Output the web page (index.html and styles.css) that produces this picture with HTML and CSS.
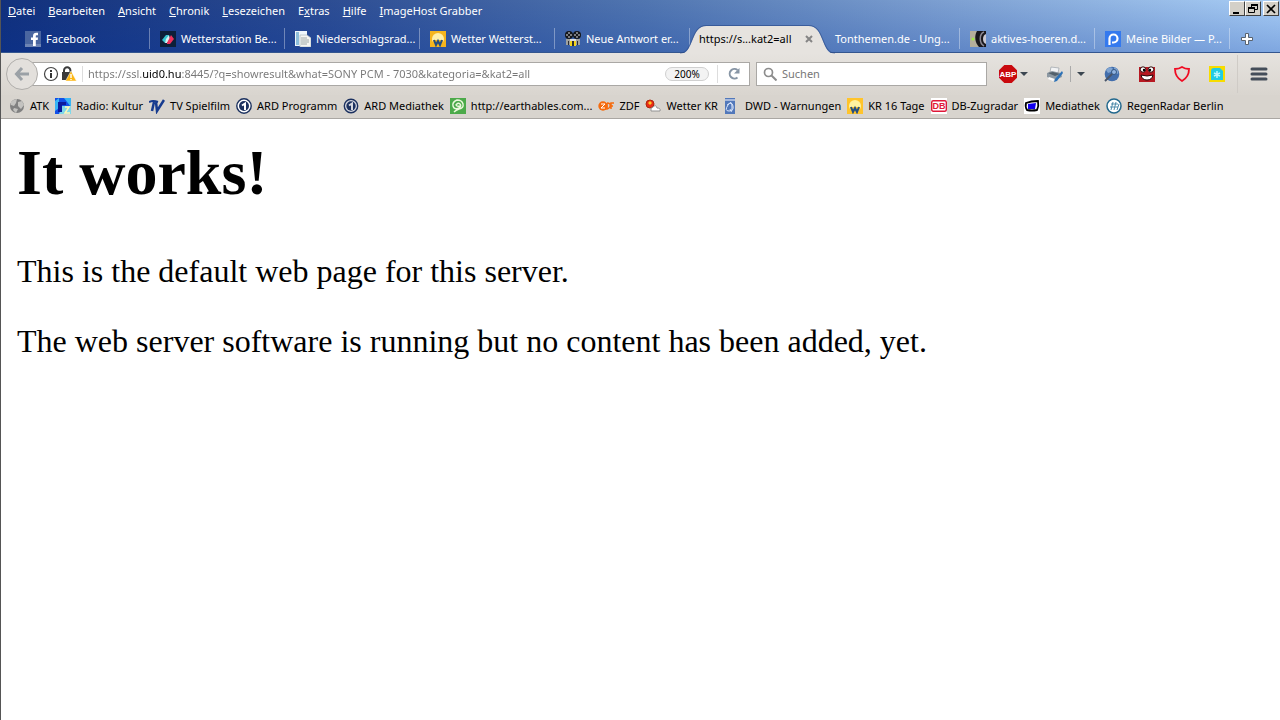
FILE: index.html
```html
<!DOCTYPE html>
<html lang="de">
	<head>
		<meta charset="utf-8">
		<title>It works!</title>
		<link rel="stylesheet" href="styles.css">
	</head>
	<body>
		<header class="chrome">
			<div class="titlebar">
				<nav class="menu">
					<button><u>D</u>atei</button>
					<button><u>B</u>earbeiten</button>
					<button><u>A</u>nsicht</button>
					<button><u>C</u>hronik</button>
					<button><u>L</u>esezeichen</button>
					<button>E<u>x</u>tras</button>
					<button><u>H</u>ilfe</button>
					<button><u>I</u>mageHost Grabber</button>
				</nav>
				<div class="window-buttons">
					<button aria-label="Minimieren"><svg viewBox="0 0 12 12"><path d="M2 9h6v2H2z"/></svg></button>
					<button aria-label="Verkleinern"><svg viewBox="0 0 12 12"><path d="M4.5 4V1.5h6v5H8" fill="none" stroke="#000"/><path d="M4 1h7v2H4zM1 4h7v2H1z"/><path d="M1.5 4.5h6v5h-6z" fill="none" stroke="#000"/></svg></button>
					<button aria-label="Schließen" class="close"><svg viewBox="0 0 12 12"><path d="M2 2l8 8M10 2l-8 8" stroke="#000" stroke-width="1.7"/></svg></button>
				</div>
			</div>

			<div class="tabs" role="tablist">
				<button class="tab" role="tab">
					<svg class="icon" viewBox="0 0 16 16"><path d="M0 0h16v16H0z" fill="#4a66a0"/><path d="M0 13h16v3H0z" fill="#6d84b4"/><path d="M8 15V9H6V6.500h2V5c0-2.300 1.400-3.300 3.200-3.300H13v2.500h-1.200c-.8 0-1 .4-1 1v1.300H13L12.700 9h-1.900v6z" fill="#fff"/></svg>
					<span>Facebook</span>
				</button>
				<button class="tab" role="tab">
					<svg class="icon" viewBox="0 0 16 16"><path d="M0 0h16v16H0z" fill="#0d1f38"/><path d="M2 9l4-5h3L5 12z" fill="#35c4cf"/><path d="M6 8l3-4 1 4-3 4H5z" fill="#d8f3f4"/><path d="M7 12l4-8 3 4-4 5H7z" fill="#f0305c"/></svg>
					<span>Wetterstation Be...</span>
				</button>
				<button class="tab" role="tab">
					<svg class="icon" viewBox="0 0 16 16"><path d="M0 0h12v15H0z" fill="#eef6fb"/><path d="M1 1h3v13H1z" fill="#8ebfdc"/><path d="M5 4h7l4 3v9H5z" fill="#f5f5f2" stroke="#aebac0" stroke-width=".7"/><path d="M6 7h6M6 9h8M6 11h8M6 13h6" stroke="#9faaa9"/></svg>
					<span>Niederschlagsrad...</span>
				</button>
				<button class="tab" role="tab">
					<svg class="icon" viewBox="0 0 16 16"><path d="M0 0h16v16H0z" fill="#f6b51d"/><circle cx="8" cy="8" r="6" fill="#fff0a8"/><path d="M3 9h10v7H3z" fill="#f6b51d"/><path d="M4 9l2 5 2-4 2 4 2-5" fill="none" stroke="#234e82" stroke-width="2"/></svg>
					<span>Wetter Wetterst...</span>
				</button>
				<button class="tab" role="tab">
					<svg class="icon" viewBox="0 0 16 16"><circle cx="4" cy="4" r="4" fill="#15171a"/><circle cx="12" cy="4" r="4" fill="#15171a"/><g fill="#9b9da0"><circle cx="4" cy="2" r="1"/><circle cx="2" cy="4" r="1"/><circle cx="6" cy="4" r="1"/><circle cx="4" cy="6" r="1"/><circle cx="12" cy="2" r="1"/><circle cx="10" cy="4" r="1"/><circle cx="14" cy="4" r="1"/><circle cx="12" cy="6" r="1"/></g><path d="M1 8h14v6H1z" fill="#9fa19f"/><path d="M5 8h6v2H5z" fill="#ddd"/><path d="M3 10h1v4H3zM12 10h1v4h-1zM7 10h2v5H7z" fill="#2b2d30"/><path d="M5 10h2v5H5zM9 10h2v5H9z" fill="#f2d51e"/></svg>
					<span>Neue Antwort er...</span>
				</button>
				<button class="tab active" role="tab" aria-selected="true">
					<svg class="tab-shape" viewBox="0 0 154 29" preserveAspectRatio="none"><path d="M0 29C14 29 10 1 26 1H128C144 1 140 29 154 29z" fill="#e6e3df"/><path d="M0 28C14 28 10 .5 26 .5H128C144 .5 140 28 154 28" fill="none" stroke="#2e4f8d" stroke-opacity=".7"/></svg>
					<span>https://s...kat2=all</span>
					<svg class="tab-close" viewBox="0 0 8 8"><path d="M1 1l6 6M7 1L1 7" stroke="#858585" stroke-width="2"/></svg>
				</button>
				<button class="tab" role="tab"><span>Tonthemen.de - Ung...</span></button>
				<button class="tab" role="tab">
					<svg class="icon" viewBox="0 0 16 16"><path d="M0 0h16v16H0z" fill="#b4ae9b"/><path d="M7 0h9v16H9C5 12 4 5 7 0z" fill="#17161b"/><path d="M14 1c-5 2-5 11 0 14" fill="none" stroke="#8b8893" stroke-width="1.5"/><path d="M16 3c-4 1-4 9 0 10z" fill="#c9c8d2"/><circle cx="3" cy="8" r="1.500" fill="#a0ec45"/></svg>
					<span>aktives-hoeren.d...</span>
				</button>
				<button class="tab" role="tab">
					<svg class="icon" viewBox="0 0 16 16"><path d="M0 0h16v16H0z" fill="#3479ee"/><path d="M4.500 14V7.500a4 4 0 1 1 4 4H7" fill="none" stroke="#fff" stroke-width="2.200"/></svg>
					<span>Meine Bilder — P...</span>
				</button>
				<button class="new-tab" aria-label="Neuer Tab"><svg viewBox="0 0 12 12"><path d="M4.500.5h3v4h4v3h-4v4h-3v-4h-4v-3h4z" fill="#fff" stroke="#59636f"/></svg></button>
			</div>

			<div class="toolbar">
				<button class="back" aria-label="Zurück"><svg viewBox="0 0 16 16"><path d="M8 2L2.500 8 8 14M3 8h12" fill="none" stroke="#9ba1a6" stroke-width="3"/></svg></button>
				<div class="urlbar">
					<svg class="icon" viewBox="0 0 16 16"><circle cx="8" cy="8" r="6.500" fill="none" stroke="#444" stroke-width="1.200"/><path d="M7 7h2v5H7zM7 4h2v2H7z" fill="#333"/></svg>
					<svg class="icon" viewBox="0 0 16 16"><path d="M3 7V4.500a3.200 3.200 0 0 1 6.400 0V7" fill="none" stroke="#3a3a3a" stroke-width="2"/><path d="M1 6h10v8H1z" fill="#3a3a3a"/><path d="M10 5l5.500 10h-11z" fill="#fdb713" stroke="#fff" stroke-width=".5"/><path d="M9.300 8h1.400v4H9.300zM9.300 13h1.400v1H9.300z" fill="#fff"/></svg>
					<input class="url" type="text" aria-label="Adresse" value="https://ssl.uid0.hu:8445/?q=showresult&amp;what=SONY PCM - 7030&amp;kategoria=&amp;kat2=all">
					<button class="zoom-level">200%</button>
					<button class="reload" aria-label="Neu laden"><svg viewBox="0 0 14 14"><path d="M10.500 10.500a4.800 4.800 0 1 1 0-7.500" fill="none" stroke="#8795a5" stroke-width="2"/><path d="M12.500 1v5.500H7z" fill="#8795a5"/></svg></button>
				</div>
				<div class="searchbar">
					<svg viewBox="0 0 14 14"><circle cx="5.500" cy="5.500" r="4" fill="none" stroke="#8c8c8c" stroke-width="1.700"/><path d="M8.500 8.500l5 5" stroke="#8c8c8c" stroke-width="2"/></svg>
					<input type="text" aria-label="Suchen" placeholder="Suchen">
				</div>
				<div class="addons">
					<button class="addon-menu" aria-label="Adblock Plus">
						<svg class="abp" viewBox="0 0 18 18"><path d="M5.300 0h7.400L18 5.300v7.400L12.700 18H5.300L0 12.700V5.300z" fill="#c9090e"/><text x="9" y="12" text-anchor="middle">ABP</text></svg>
						<svg class="arrow" viewBox="0 0 8 4"><path d="M0 0h8L4 4z"/></svg>
					</button>
					<button aria-label="Drucken"><svg class="icon" viewBox="0 0 16 16"><path d="M4 1l8 1-1 5-8-1z" fill="#f2f3f4" stroke="#8d969e" stroke-width=".6"/><path d="M0 7l5-2 9 2 1 4-7 3-8-3z" fill="#8c98a2"/><path d="M1 7l5-1 7 2-5 2z" fill="#52606b"/><path d="M2 11l6 2-2 2-5-2z" fill="#fafafa"/><path d="M8 13l7-8 1 2-6 8-3 1z" fill="#2d72b7"/></svg></button>
					<button class="split" aria-label="Druckoptionen"><svg class="arrow" viewBox="0 0 8 4"><path d="M0 0h8L4 4z"/></svg></button>
					<button aria-label="Globus"><svg class="icon" viewBox="0 0 16 16"><circle cx="8" cy="8" r="7.300" fill="#426eac"/><path d="M2 4c3-4 6-3 7-1L7 6 4 7zM10 1c3 1 5 4 4 7l-4-2z" fill="#7fa3d0"/><path d="M1 15l8-8" stroke="#49566a" stroke-width="2"/><circle cx="10" cy="6" r="2.500" fill="#8fb3e0" stroke="#345782"/></svg></button>
					<button aria-label="Monster"><svg class="icon" viewBox="0 0 16 16"><path d="M0 1h16v15H0z" fill="#b71922"/><circle cx="4" cy="3.500" r="2.700" fill="#fff" stroke="#310e10"/><circle cx="12" cy="3.500" r="2.700" fill="#fff" stroke="#310e10"/><circle cx="5" cy="4" r="1.200"/><circle cx="11" cy="4" r="1.200"/><path d="M2 9q6 2 12 0-1 5-6 5T2 9z" fill="#fff" stroke="#250608"/></svg></button>
					<button aria-label="Schutz"><svg class="icon" viewBox="0 0 16 16"><path d="M8 1q3 2 7 2 0 8-7 12Q1 11 1 3q4 0 7-2z" fill="none" stroke="#f00b22" stroke-width="1.800"/></svg></button>
					<button aria-label="Wetter"><svg class="icon" viewBox="0 0 16 16"><path d="M0 0h16v16H0z" fill="#f7dc00"/><path d="M2 5q0-3 3-3h6l3 3v9H2z" fill="#20cce5"/><path d="M8 5v7M5 7l6 3M11 7l-6 3" stroke="#b5f4fa" stroke-width="1.500"/></svg></button>
					<button class="hamburger" aria-label="Menü"><svg viewBox="0 0 18 14"><path d="M2 2h14M2 7h14M2 12h14" stroke="#444d59" stroke-width="3" stroke-linecap="round"/></svg></button>
				</div>
			</div>

			<nav class="bookmarks">
				<a href="#"><svg class="icon" viewBox="0 0 16 16"><circle cx="8" cy="8" r="7" fill="#818181"/><path d="M2 4q3-3 6-3L7 5 5 8 2 7zM9 4l4-1 2 4-3 4-3-3zM5 10l4 1-2 4-3-3z" fill="#c4c3c0"/></svg>ATK</a>
				<a href="#"><svg class="icon" viewBox="0 0 16 16"><path d="M0 0h16v16H0z" fill="#1250e8"/><path d="M0 3l4-3v10l-4 3z" fill="#38b4f5"/><path d="M9 0h7v9z" fill="#38b4f5"/><path d="M7 8h9v8H4z" fill="#7fd8ea"/><path d="M3 14V4h8v3H7v7z" fill="#0c1b9c"/><path d="M10 9h4l-4 6h5" fill="none" stroke="#fff6b8" stroke-width="1.500"/></svg>Radio: Kultur</a>
				<a href="#"><svg class="icon" viewBox="0 0 16 16"><path d="M0 4q4-2 9 0" fill="none" stroke="#173b8f" stroke-width="2"/><path d="M5 4L3 13M7 4l1 9 7-11" fill="none" stroke="#173b8f" stroke-width="2.500"/></svg>TV Spielfilm</a>
				<a href="#"><svg class="icon" viewBox="0 0 16 16"><circle cx="8" cy="8" r="7.200" fill="#fff" stroke="#1c315f" stroke-width="1.400"/><circle cx="8" cy="8" r="5" fill="#1c315f"/><path d="M6 7.500l3-2V12" fill="none" stroke="#fff" stroke-width="2"/></svg>ARD Programm</a>
				<a href="#"><svg class="icon" viewBox="0 0 16 16"><circle cx="8" cy="8" r="6.700" fill="#d7d8df" stroke="#1c315f" stroke-width="1.400"/><circle cx="8" cy="8" r="4.700" fill="#1c315f"/><path d="M6 7.500l3-2V12" fill="none" stroke="#d7d8df" stroke-width="2"/></svg>ARD Mediathek</a>
				<a href="#"><svg class="icon" viewBox="0 0 16 16"><path d="M0 0h16v16H0z" fill="#4caa4a"/><path d="M4 14q2-2 5-3 5-1 4-5T7 2Q2 4 3 8t6 2q3-2 1-4T6 7q1 2 4 1" fill="none" stroke="#ecf8dc" stroke-width="1.400"/></svg>http://earthables.com...</a>
				<a href="#"><svg class="icon" viewBox="0 0 16 16"><circle cx="5" cy="8" r="4.700" fill="#f56b0e"/><path d="M9 5v6q4-1 3-5-1-1-3-1M13 11V5h3M13 8h2" fill="none" stroke="#f56b0e" stroke-width="1.500"/><path d="M3 6h4l-4 4h4" fill="none" stroke="#fff"/></svg>ZDF</a>
				<a href="#"><svg class="icon" viewBox="0 0 16 16"><circle cx="5" cy="6" r="4" fill="#e92b16" stroke="#ad270c"/><path d="M3 5l2-2 2 2-2 2z" fill="#ffca24"/><path d="M6 13q-1-3 2-4 3-3 4 1 4 0 3 3z" fill="#fff" stroke="#929292"/></svg>Wetter KR</a>
				<a href="#"><svg class="icon" viewBox="0 0 16 16"><path d="M1 0h10v16H1z" fill="#5278ba"/><path d="M1 1h10v2H1z" fill="#a6b9dd"/><path d="M3 7q5-4 6 1t-4 5-1-6 4 2-2 2" fill="none" stroke="#d9e5fa"/></svg>DWD - Warnungen</a>
				<a href="#"><svg class="icon" viewBox="0 0 16 16"><path d="M0 0h16v16H0z" fill="#ffc42b"/><circle cx="8" cy="8" r="6" fill="#fff2a0"/><path d="M3 9h10v7H3z" fill="#ffc42b"/><path d="M4 9l2 5 2-4 2 4 2-5" fill="none" stroke="#234e82" stroke-width="2"/></svg>KR 16 Tage</a>
				<a href="#"><svg class="icon" viewBox="0 0 16 16"><path d="M0 0h16v16H0z" fill="#fff"/><rect x=".7" y="2.700" width="14.600" height="10.600" rx="1.500" fill="#fff" stroke="#df1838" stroke-width="1.400"/><text class="db" x="8" y="11" text-anchor="middle">DB</text></svg>DB-Zugradar</a>
				<a href="#"><svg class="icon" viewBox="0 0 16 16"><path d="M0 0h16v16H0z" fill="#fff"/><path d="M2 5q5-2 12-2 1 5-1 9-5 1-10 0Q1 9 2 5z" fill="#fff" stroke="#000" stroke-width="1.800"/><path d="M4 6l8-1-1 6H4z" fill="#1200ee"/></svg>Mediathek</a>
				<a href="#"><svg class="icon" viewBox="0 0 16 16"><circle cx="8" cy="8" r="7" fill="#fff" stroke="#22688d" stroke-width="1.500"/><path d="M7 4L5 12M10 4L8 12M13 6l-2 6M5 6h7M4 9h8" stroke="#4f8baa"/></svg>RegenRadar Berlin</a>
			</nav>
		</header>

		<main class="page">
			<h1>It works!</h1>
			<p>This is the default web page for this server.</p>
			<p>The web server software is running but no content has been added, yet.</p>
		</main>
	</body>
</html>
```
FILE: styles.css
```css
* {
	box-sizing: border-box;
}

body {
	margin: 0;
	min-height: 100vh;
	display: flex;
	flex-direction: column;
	border-left: 1px solid #555;
	background: #fff;
}

button {
	padding: 0;
	border: 0;
	background: none;
	color: inherit;
	font: inherit;
	white-space: nowrap;
}

svg {
	display: block;
	flex: none;
}

.icon {
	width: 16px;
	height: 16px;
}

.chrome {
	font: 11px/16px "Noto Sans", sans-serif;
	color: #000;
	background: linear-gradient(rgba(0, 50, 160, 0), rgba(0, 50, 160, 0.25) 53px), linear-gradient(90deg, #11307c, #2c4c92 25%, #5075b0 50%, #7fa2d3 75%, #a8cdf5);
}

/* menu + window buttons */
.titlebar {
	height: 22px;
	display: flex;
	justify-content: space-between;
	align-items: flex-start;
	padding: 1px 1px 0 7px;
}

.menu {
	display: flex;
	gap: 13px;
	padding-top: 2px;
	color: #fff;
}

.window-buttons {
	display: flex;
}

.window-buttons button {
	width: 16px;
	height: 15px;
	padding: 1px;
	background: #d4d0c8;
	border: 1px solid;
	border-color: #fff #404040 #404040 #fff;
}

.window-buttons svg {
	width: 12px;
	height: 12px;
}

.window-buttons .close {
	margin-left: 2px;
}

/* tabs */
.tabs {
	display: flex;
	height: 31px;
	padding: 3px 0 0 14px;
	color: #fff;
	box-shadow: inset 0 -1px #34568f;
}

.tab {
	position: relative;
	flex: 0 1 135px;
	display: flex;
	align-items: center;
	gap: 5px;
	padding-left: 10px;
	background: linear-gradient(rgba(255, 255, 255, 0.35), rgba(255, 255, 255, 0.35)) right 3px / 1px 21px no-repeat;
}

.tab.active {
	z-index: 1;
	justify-content: space-between;
	padding: 0 12px 0 9px;
	background: none;
	color: #000;
}

.tab.active span,
.tab-close {
	position: relative;
}

.tab-shape {
	position: absolute;
	left: -10px;
	top: 0;
	width: calc(100% + 20px);
	height: 29px;
}

.tab-close {
	width: 8px;
	height: 8px;
}

.new-tab {
	padding: 0 11px;
}

.new-tab svg {
	width: 12px;
	height: 12px;
}

/* address bar row */
.toolbar {
	display: flex;
	align-items: center;
	height: 42px;
	padding: 0 12px 0 5px;
	background: linear-gradient(#e6e3df, #d9d5cf);
}

.back {
	z-index: 1;
	width: 32px;
	height: 32px;
	padding: 7px;
	border: 1px solid #b0aeab;
	border-radius: 50%;
	background: #e3e0dc;
}

.back svg {
	width: 16px;
	height: 16px;
}

.urlbar,
.searchbar {
	display: flex;
	align-items: center;
	height: 24px;
	background: #fff;
	border: 1px solid #aaa8a5;
}

.urlbar {
	flex: 1;
	margin-left: -8px;
	padding-left: 12px;
	gap: 2px;
}

.urlbar input,
.searchbar input {
	flex: 1;
	min-width: 0;
	height: 16px;
	border: 0;
	padding: 0;
	outline: 0;
	font: inherit;
	background: none;
}

/* the host name is darker than the rest of the address */
.urlbar .url {
	margin-left: 3px;
	padding-left: 5px;
	border-left: 1px solid #ddd;
	background: linear-gradient(90deg, #777 59px, #000 59px, #000 98px, #777 98px);
	background-clip: text;
	-webkit-background-clip: text;
	color: transparent;
}

.zoom-level {
	width: 44px;
	height: 14px;
	border: 1px solid #d0d0d0;
	border-radius: 7px;
	background: #f3f3f3;
	font-size: 10px;
	line-height: 12px;
}

.reload {
	display: flex;
	justify-content: center;
	width: 32px;
	height: 18px;
	margin-left: 6px;
	padding-top: 2px;
	border-left: 1px solid #ddd;
}

.reload svg {
	width: 14px;
	height: 14px;
}

.searchbar {
	flex: 0 1 231px;
	margin-left: 6px;
	padding-left: 6px;
	gap: 5px;
}

.searchbar svg {
	width: 14px;
	height: 14px;
}

.searchbar input::placeholder {
	color: #777;
	opacity: 1;
}

.addons {
	display: flex;
	align-items: center;
	padding-left: 12px;
}

.addons button {
	margin-right: 19px;
}

.addons .addon-menu {
	display: flex;
	align-items: center;
	gap: 3px;
}

.abp {
	width: 18px;
	height: 18px;
}

.abp text {
	font: bold 8px "Liberation Sans", sans-serif;
	fill: #fff;
}

.arrow {
	width: 8px;
	height: 4px;
	fill: #3b4650;
}

.addons .split {
	height: 16px;
	margin-left: -12px;
	padding-left: 6px;
	border-left: 1px solid #aaa;
}

.addons .hamburger {
	height: 38px;
	margin: 0 0 0 -7px;
	padding-left: 12px;
	border-left: 1px solid #cfcbc6;
}

.hamburger svg {
	width: 18px;
	height: 14px;
}

/* bookmarks */
.bookmarks {
	display: flex;
	gap: 6px;
	height: 24px;
	padding: 3px 8px 0;
	background: #d8d4ce;
	border-bottom: 1px solid #aaa7a3;
}

.bookmarks a {
	display: flex;
	gap: 5px;
	color: #000;
	text-decoration: none;
	white-space: nowrap;
}

.db {
	font: bold 9px "Liberation Sans", sans-serif;
	fill: #df1838;
}

/* the loaded page, zoomed to 200% */
.page {
	flex: 1;
	padding: 16px;
	font: 32px/36px "Liberation Serif", serif;
}

.page h1 {
	margin: 0 0 42px;
	font-size: 64px;
	line-height: 76px;
}

.page p {
	margin: 0 0 34px;
}
```
